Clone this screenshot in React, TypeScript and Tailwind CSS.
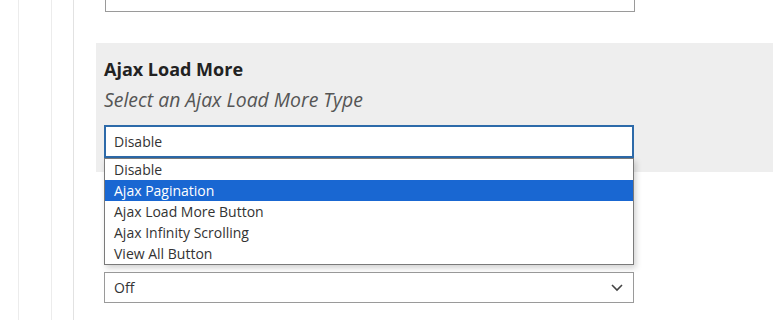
import React from 'react';

const options = ['Disable', 'Ajax Pagination', 'Ajax Load More Button', 'Ajax Infinity Scrolling', 'View All Button'];

function App() {
  return (
    <div className="flex h-[320px] w-[773px] overflow-hidden bg-white font-['Open_Sans',sans-serif] text-[#333]">
      {/* left gutters */}
      <div className="w-[19px] shrink-0 border-r border-[#ececec]" />
      <div className="w-[33px] shrink-0 border-r border-[#ececec]" />
      <div className="w-[22px] shrink-0 border-r border-[#e2e2e2]" />

      <main className="flex-1 pl-[22px]">
        <div className="ml-[9px] mt-[-20px] h-[32px] w-[530px] border border-[#9a9a9a] bg-white" />

        <section className="mt-[31px] h-[129px] bg-[#eeeeee] pl-[8px] pt-[13px]">
          <h3 className="text-[18px] font-bold leading-[26px] text-[#222]">Ajax Load More</h3>
          <p className="mt-[4px] text-[19.4px] italic leading-[28px] text-[#555]">Select an Ajax Load More Type</p>

          <div className="relative mt-[11px] w-[530px]">
            <div className="flex h-[33px] items-center border-2 border-[#2d6aa9] bg-white pl-[8px] text-[14px]">
              Disable
            </div>
            <ul className="absolute left-0 top-full z-10 w-full border border-[#7a7a7a] bg-white shadow-[2px_3px_6px_rgba(0,0,0,0.18)]">
              {options.map((o, i) => (
                <li
                  key={o}
                  className={
                    i === 1
                      ? 'h-[21px] bg-[#1967d2] pl-[9px] text-[14px] leading-[21px] text-white'
                      : 'h-[21px] pl-[9px] text-[14px] leading-[21px] text-[#333]'
                  }
                >
                  {o}
                </li>
              ))}
            </ul>
          </div>
        </section>

        <div className="ml-[8px] mt-[100px] flex h-[31px] w-[530px] items-center justify-between border border-[#9a9a9a] bg-white pl-[9px] pr-[9px] text-[14px]">
          <span>Off</span>
          <svg width="14" height="9" viewBox="0 0 14 9" fill="none" stroke="#444" strokeWidth="1.6">
            <path d="M2 2l5 5 5-5" />
          </svg>
        </div>
      </main>
    </div>
  );
}

export default App;
